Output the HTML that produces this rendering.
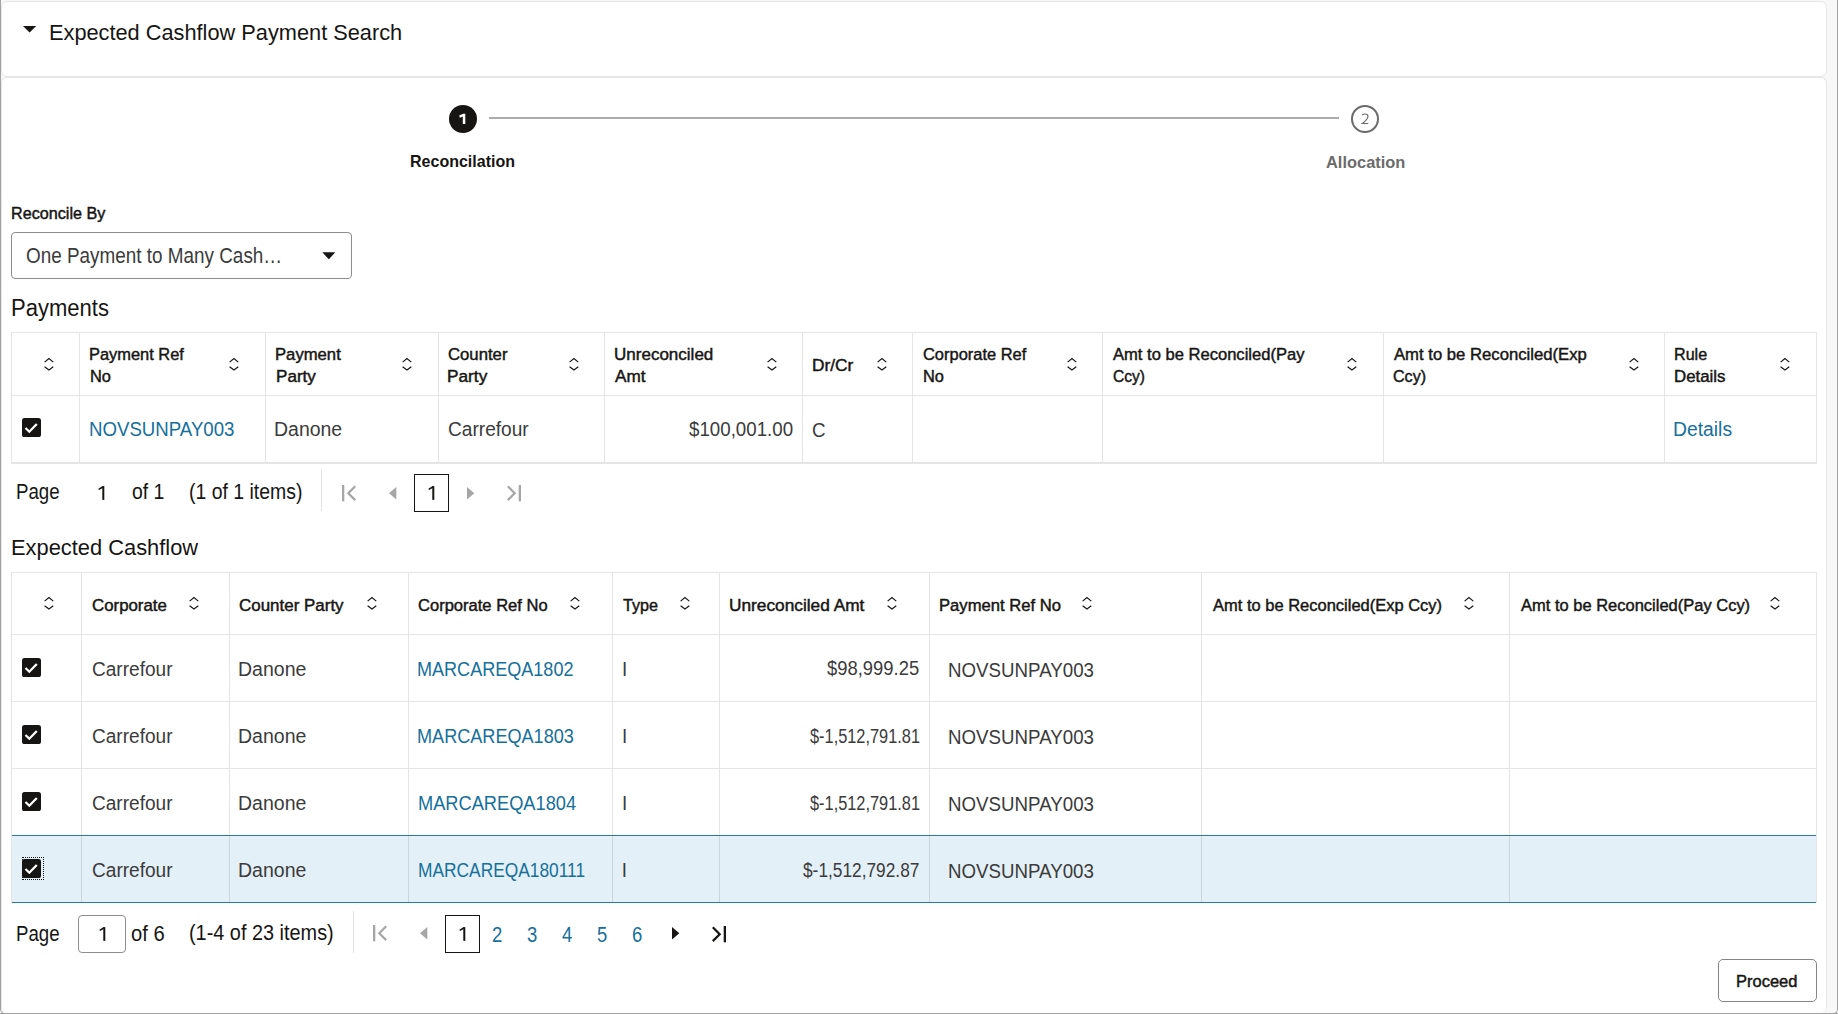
<!DOCTYPE html>
<html><head><meta charset="utf-8">
<style>
*{box-sizing:border-box;margin:0;padding:0}
html,body{width:1838px;height:1014px;overflow:hidden;background:#fff;font-family:"Liberation Sans",sans-serif;color:#161513}
.a{position:absolute}
.t{position:absolute;white-space:nowrap;transform-origin:0 0}
.vl{position:absolute;width:1px;background:#e5e5e5}
.hl{position:absolute;height:1px;background:#e5e5e5}
.s{-webkit-text-stroke:0.45px currentColor}
.b{font-weight:bold}
</style></head><body>

<div class="a" style="left:0;top:-10px;width:1838px;height:1024px;background:#f8f8f8;border:1px solid #a2a2a2;border-top:none;border-radius:0 0 5px 5px"></div>
<div class="a" style="left:1px;top:1px;width:1826px;height:76px;background:#fff;border:1px solid #e6e6e6;border-radius:6px"></div>
<div class="a" style="left:1px;top:77px;width:1826px;height:936px;background:#fff;border:1px solid #e6e6e6;border-bottom:none;border-radius:6px 6px 5px 5px"></div>
<div class="a" style="left:0;top:1013px;width:1838px;height:1px;background:#a2a2a2"></div>
<svg class="a" style="left:23px;top:26px" width="14" height="7" viewBox="0 0 14 7"><path d="M0 0H13.2L6.6 6.6Z" fill="#161513"/></svg>
<div class="a" style="left:489px;top:117px;width:850px;height:2px;background:#ababab"></div>
<div class="a" style="left:449px;top:105px;width:28px;height:28px;border-radius:50%;background:#161513"></div>
<svg class="a" style="left:455px;top:111px" width="16" height="16" viewBox="0 0 16 16"><path d="M4.2 4.6L8.2 2.8H10.3V13.1H7.8V5.6L4.9 6.7Z" fill="#fff"/></svg>
<div class="a" style="left:1351px;top:105px;width:28px;height:28px;border-radius:50%;border:2px solid #6b6b6b"></div>
<svg class="a" style="left:1357px;top:111px" width="16" height="16" viewBox="0 0 16 16"><path d="M5.0 4.2C5.8 3.3 6.8 3.0 8.0 3.0C9.9 3.0 11.0 4.1 11.0 5.6C11.0 7.2 10.0 8.3 7.6 10.6L5.3 12.5H11.3" fill="none" stroke="#6b6b6b" stroke-width="1.2"/></svg>
<div class="a" style="left:11px;top:232px;width:341px;height:47px;border:1px solid #8d8d8d;border-radius:4px"></div>
<svg class="a" style="left:322px;top:251.5px" width="14" height="8" viewBox="0 0 14 8"><path d="M0.3 0.3H13.3L6.8 7.3Z" fill="#161513"/></svg>
<div class="a" style="left:11px;top:332px;width:1806px;height:132px;border:1px solid #e5e5e5;border-bottom:2px solid #e5e5e5"></div>
<div class="vl" style="left:79px;top:332px;height:130px"></div>
<div class="vl" style="left:265px;top:332px;height:130px"></div>
<div class="vl" style="left:438px;top:332px;height:130px"></div>
<div class="vl" style="left:604px;top:332px;height:130px"></div>
<div class="vl" style="left:802px;top:332px;height:130px"></div>
<div class="vl" style="left:912px;top:332px;height:130px"></div>
<div class="vl" style="left:1102px;top:332px;height:130px"></div>
<div class="vl" style="left:1383px;top:332px;height:130px"></div>
<div class="vl" style="left:1664px;top:332px;height:130px"></div>
<div class="hl" style="left:11px;top:395px;width:1805px"></div>
<svg class="a" style="left:42.90px;top:356.50px" width="11.90" height="14.60" viewBox="-1 -1 11.90 14.60"><path d="M0.6 4.1L4.95 0.6L9.30 4.1M0.6 8.80L4.95 12.00L9.30 8.80" fill="none" stroke="#161513" stroke-width="1.2"/></svg>
<svg class="a" style="left:228.30px;top:357.00px" width="11.90" height="14.60" viewBox="-1 -1 11.90 14.60"><path d="M0.6 4.1L4.95 0.6L9.30 4.1M0.6 8.80L4.95 12.00L9.30 8.80" fill="none" stroke="#161513" stroke-width="1.2"/></svg>
<svg class="a" style="left:401.40px;top:357.00px" width="11.90" height="14.60" viewBox="-1 -1 11.90 14.60"><path d="M0.6 4.1L4.95 0.6L9.30 4.1M0.6 8.80L4.95 12.00L9.30 8.80" fill="none" stroke="#161513" stroke-width="1.2"/></svg>
<svg class="a" style="left:568.00px;top:357.00px" width="11.90" height="14.60" viewBox="-1 -1 11.90 14.60"><path d="M0.6 4.1L4.95 0.6L9.30 4.1M0.6 8.80L4.95 12.00L9.30 8.80" fill="none" stroke="#161513" stroke-width="1.2"/></svg>
<svg class="a" style="left:765.80px;top:356.80px" width="11.90" height="14.60" viewBox="-1 -1 11.90 14.60"><path d="M0.6 4.1L4.95 0.6L9.30 4.1M0.6 8.80L4.95 12.00L9.30 8.80" fill="none" stroke="#161513" stroke-width="1.2"/></svg>
<svg class="a" style="left:875.50px;top:356.80px" width="11.90" height="14.60" viewBox="-1 -1 11.90 14.60"><path d="M0.6 4.1L4.95 0.6L9.30 4.1M0.6 8.80L4.95 12.00L9.30 8.80" fill="none" stroke="#161513" stroke-width="1.2"/></svg>
<svg class="a" style="left:1065.70px;top:356.80px" width="11.90" height="14.60" viewBox="-1 -1 11.90 14.60"><path d="M0.6 4.1L4.95 0.6L9.30 4.1M0.6 8.80L4.95 12.00L9.30 8.80" fill="none" stroke="#161513" stroke-width="1.2"/></svg>
<svg class="a" style="left:1345.90px;top:356.80px" width="11.90" height="14.60" viewBox="-1 -1 11.90 14.60"><path d="M0.6 4.1L4.95 0.6L9.30 4.1M0.6 8.80L4.95 12.00L9.30 8.80" fill="none" stroke="#161513" stroke-width="1.2"/></svg>
<svg class="a" style="left:1627.50px;top:356.80px" width="11.90" height="14.60" viewBox="-1 -1 11.90 14.60"><path d="M0.6 4.1L4.95 0.6L9.30 4.1M0.6 8.80L4.95 12.00L9.30 8.80" fill="none" stroke="#161513" stroke-width="1.2"/></svg>
<svg class="a" style="left:1778.90px;top:356.80px" width="11.90" height="14.60" viewBox="-1 -1 11.90 14.60"><path d="M0.6 4.1L4.95 0.6L9.30 4.1M0.6 8.80L4.95 12.00L9.30 8.80" fill="none" stroke="#161513" stroke-width="1.2"/></svg>
<svg class="a" style="left:22px;top:418px" width="19" height="19" viewBox="0 0 19 19"><rect x="0" y="0" width="19" height="19" rx="2.6" fill="#161513"/><path d="M3.5 10.0L7.3 13.7L14.8 6.0" fill="none" stroke="#fff" stroke-width="2.3"/></svg>
<div class="vl" style="left:321px;top:469px;height:42px;background:#e3e3e3"></div>
<svg class="a" style="left:342.3px;top:485.3px" width="16" height="17" viewBox="0 0 16 17"><rect x="0" y="0" width="2.3" height="16.3" fill="#a6a6a6"/><path d="M13.2 1.2L6.3 8.15L13.2 15.1" fill="none" stroke="#a6a6a6" stroke-width="2.2"/></svg>
<svg class="a" style="left:389px;top:487.3px" width="8" height="13" viewBox="0 0 8 13"><path d="M7.3 0V12.6L0 6.3Z" fill="#a6a6a6"/></svg>
<svg class="a" style="left:467px;top:487.3px" width="8" height="13" viewBox="0 0 8 13"><path d="M0 0V12.6L7.3 6.3Z" fill="#a6a6a6"/></svg>
<svg class="a" style="left:506.8px;top:485.3px" width="16" height="17" viewBox="0 0 16 17"><rect x="11.7" y="0" width="2.3" height="16.3" fill="#a6a6a6"/><path d="M0.8 1.2L7.7 8.15L0.8 15.1" fill="none" stroke="#a6a6a6" stroke-width="2.2"/></svg>
<div class="a" style="left:414px;top:474px;width:35px;height:38px;border:1px solid #161513"></div>
<div class="a" style="left:11px;top:572px;width:1806px;height:331px;border:1px solid #e5e5e5;border-bottom:none"></div>
<div class="vl" style="left:81px;top:572px;height:263px"></div>
<div class="vl" style="left:229px;top:572px;height:263px"></div>
<div class="vl" style="left:408px;top:572px;height:263px"></div>
<div class="vl" style="left:612px;top:572px;height:263px"></div>
<div class="vl" style="left:719px;top:572px;height:263px"></div>
<div class="vl" style="left:929px;top:572px;height:263px"></div>
<div class="vl" style="left:1201px;top:572px;height:263px"></div>
<div class="vl" style="left:1509px;top:572px;height:263px"></div>
<div class="hl" style="left:11px;top:634px;width:1805px"></div>
<div class="hl" style="left:11px;top:701px;width:1805px"></div>
<div class="hl" style="left:11px;top:768px;width:1805px"></div>
<div class="a" style="left:12px;top:835px;width:1804px;height:68px;background:#e4f0f7;border-top:1px solid #2a7aa3;border-bottom:1px solid #2a7aa3"></div>
<div class="vl" style="left:81px;top:836px;height:66px;background:#c9d6de"></div>
<div class="vl" style="left:229px;top:836px;height:66px;background:#c9d6de"></div>
<div class="vl" style="left:408px;top:836px;height:66px;background:#c9d6de"></div>
<div class="vl" style="left:612px;top:836px;height:66px;background:#c9d6de"></div>
<div class="vl" style="left:719px;top:836px;height:66px;background:#c9d6de"></div>
<div class="vl" style="left:929px;top:836px;height:66px;background:#c9d6de"></div>
<div class="vl" style="left:1201px;top:836px;height:66px;background:#c9d6de"></div>
<div class="vl" style="left:1509px;top:836px;height:66px;background:#c9d6de"></div>
<svg class="a" style="left:42.90px;top:595.70px" width="11.90" height="14.60" viewBox="-1 -1 11.90 14.60"><path d="M0.6 4.1L4.95 0.6L9.30 4.1M0.6 8.80L4.95 12.00L9.30 8.80" fill="none" stroke="#161513" stroke-width="1.2"/></svg>
<svg class="a" style="left:187.50px;top:595.70px" width="11.90" height="14.60" viewBox="-1 -1 11.90 14.60"><path d="M0.6 4.1L4.95 0.6L9.30 4.1M0.6 8.80L4.95 12.00L9.30 8.80" fill="none" stroke="#161513" stroke-width="1.2"/></svg>
<svg class="a" style="left:365.60px;top:595.70px" width="11.90" height="14.60" viewBox="-1 -1 11.90 14.60"><path d="M0.6 4.1L4.95 0.6L9.30 4.1M0.6 8.80L4.95 12.00L9.30 8.80" fill="none" stroke="#161513" stroke-width="1.2"/></svg>
<svg class="a" style="left:568.80px;top:595.70px" width="11.90" height="14.60" viewBox="-1 -1 11.90 14.60"><path d="M0.6 4.1L4.95 0.6L9.30 4.1M0.6 8.80L4.95 12.00L9.30 8.80" fill="none" stroke="#161513" stroke-width="1.2"/></svg>
<svg class="a" style="left:679.00px;top:595.70px" width="11.90" height="14.60" viewBox="-1 -1 11.90 14.60"><path d="M0.6 4.1L4.95 0.6L9.30 4.1M0.6 8.80L4.95 12.00L9.30 8.80" fill="none" stroke="#161513" stroke-width="1.2"/></svg>
<svg class="a" style="left:886.00px;top:595.70px" width="11.90" height="14.60" viewBox="-1 -1 11.90 14.60"><path d="M0.6 4.1L4.95 0.6L9.30 4.1M0.6 8.80L4.95 12.00L9.30 8.80" fill="none" stroke="#161513" stroke-width="1.2"/></svg>
<svg class="a" style="left:1081.30px;top:595.70px" width="11.90" height="14.60" viewBox="-1 -1 11.90 14.60"><path d="M0.6 4.1L4.95 0.6L9.30 4.1M0.6 8.80L4.95 12.00L9.30 8.80" fill="none" stroke="#161513" stroke-width="1.2"/></svg>
<svg class="a" style="left:1462.80px;top:595.70px" width="11.90" height="14.60" viewBox="-1 -1 11.90 14.60"><path d="M0.6 4.1L4.95 0.6L9.30 4.1M0.6 8.80L4.95 12.00L9.30 8.80" fill="none" stroke="#161513" stroke-width="1.2"/></svg>
<svg class="a" style="left:1769.00px;top:595.70px" width="11.90" height="14.60" viewBox="-1 -1 11.90 14.60"><path d="M0.6 4.1L4.95 0.6L9.30 4.1M0.6 8.80L4.95 12.00L9.30 8.80" fill="none" stroke="#161513" stroke-width="1.2"/></svg>
<svg class="a" style="left:22px;top:657.5px" width="19" height="19" viewBox="0 0 19 19"><rect x="0" y="0" width="19" height="19" rx="2.6" fill="#161513"/><path d="M3.5 10.0L7.3 13.7L14.8 6.0" fill="none" stroke="#fff" stroke-width="2.3"/></svg>
<svg class="a" style="left:22px;top:724.5px" width="19" height="19" viewBox="0 0 19 19"><rect x="0" y="0" width="19" height="19" rx="2.6" fill="#161513"/><path d="M3.5 10.0L7.3 13.7L14.8 6.0" fill="none" stroke="#fff" stroke-width="2.3"/></svg>
<svg class="a" style="left:22px;top:791.5px" width="19" height="19" viewBox="0 0 19 19"><rect x="0" y="0" width="19" height="19" rx="2.6" fill="#161513"/><path d="M3.5 10.0L7.3 13.7L14.8 6.0" fill="none" stroke="#fff" stroke-width="2.3"/></svg>
<svg class="a" style="left:22px;top:858.7px" width="19" height="19" viewBox="0 0 19 19"><rect x="0" y="0" width="19" height="19" rx="2.6" fill="#161513"/><path d="M3.5 10.0L7.3 13.7L14.8 6.0" fill="none" stroke="#fff" stroke-width="2.3"/></svg>
<div class="a" style="left:22px;top:857px;width:21.5px;height:23px;border:1px dotted #161513"></div>
<div class="a" style="left:78px;top:915px;width:48px;height:38px;border:1px solid #8d8d8d;border-radius:4px"></div>
<div class="vl" style="left:352.5px;top:910.5px;height:42px;background:#e3e3e3"></div>
<svg class="a" style="left:372.8px;top:925.2px" width="16" height="17" viewBox="0 0 16 17"><rect x="0" y="0" width="2.3" height="16.3" fill="#a6a6a6"/><path d="M13.2 1.2L6.3 8.15L13.2 15.1" fill="none" stroke="#a6a6a6" stroke-width="2.2"/></svg>
<svg class="a" style="left:419.6px;top:927.1px" width="8" height="13" viewBox="0 0 8 13"><path d="M7.3 0V12.6L0 6.3Z" fill="#a6a6a6"/></svg>
<div class="a" style="left:445px;top:915px;width:35px;height:38px;border:1px solid #161513"></div>
<svg class="a" style="left:672.1px;top:927.0px" width="8" height="13" viewBox="0 0 8 13"><path d="M0 0V12.6L7.3 6.3Z" fill="#161513"/></svg>
<svg class="a" style="left:712.2px;top:925.6px" width="16" height="17" viewBox="0 0 16 17"><rect x="11.7" y="0" width="2.3" height="16.3" fill="#161513"/><path d="M0.8 1.2L7.7 8.15L0.8 15.1" fill="none" stroke="#161513" stroke-width="2.2"/></svg>
<div class="a" style="left:1718px;top:959px;width:99px;height:43px;border:1px solid #858585;border-radius:5px"></div>
<svg class="a" style="left:97.40px;top:484.90px" width="10" height="17" viewBox="-1 -1 10 17"><rect x="4.3" y="0.1" width="2.0" height="13.8" fill="#161513"/><path d="M0.7 3.4L5.2 0.7" fill="none" stroke="#161513" stroke-width="1.6"/></svg>
<svg class="a" style="left:426.70px;top:485.00px" width="10" height="17" viewBox="-1 -1 10 17"><rect x="4.3" y="0.1" width="2.0" height="13.8" fill="#161513"/><path d="M0.7 3.4L5.2 0.7" fill="none" stroke="#161513" stroke-width="1.6"/></svg>
<svg class="a" style="left:97.60px;top:925.90px" width="10" height="17" viewBox="-1 -1 10 17"><rect x="4.3" y="0.1" width="2.0" height="13.8" fill="#161513"/><path d="M0.7 3.4L5.2 0.7" fill="none" stroke="#161513" stroke-width="1.6"/></svg>
<svg class="a" style="left:457.60px;top:926.00px" width="10" height="17" viewBox="-1 -1 10 17"><rect x="4.3" y="0.1" width="2.0" height="13.8" fill="#161513"/><path d="M0.7 3.4L5.2 0.7" fill="none" stroke="#161513" stroke-width="1.6"/></svg>
<div class="t" style="left:49.28px;top:18.00px;font-size:21.7px;line-height:28px;color:#161513;transform:scale(1.0033,1.0241)">Expected Cashflow Payment Search</div>
<div class="t b" style="left:409.52px;top:150.00px;font-size:16px;line-height:21px;color:#161513;transform:scale(1.0012,1.0397)">Reconcilation</div>
<div class="t b" style="left:1326.12px;top:151.00px;font-size:16.5px;line-height:21px;color:#6b6b6b;transform:scale(0.9950,1.0515)">Allocation</div>
<div class="t s" style="left:11.44px;top:203.00px;font-size:16px;line-height:21px;color:#161513;transform:scale(1.0100,0.9794)">Reconcile By</div>
<div class="t" style="left:26.24px;top:242.00px;font-size:19px;line-height:25px;color:#3b3b3b;transform:scale(0.9944,1.1268)">One Payment to Many Cash…</div>
<div class="t" style="left:10.83px;top:293.00px;font-size:22px;line-height:29px;color:#161513;transform:scale(1.0020,1.0460)">Payments</div>
<div class="t s" style="left:89.31px;top:345.00px;font-size:16.5px;line-height:21px;color:#161513;transform:scale(0.9948,0.9629)">Payment Ref</div>
<div class="t s" style="left:89.82px;top:367.00px;font-size:16.5px;line-height:21px;color:#161513;transform:scale(0.9939,0.9629)">No</div>
<div class="t s" style="left:275.11px;top:345.00px;font-size:16.5px;line-height:21px;color:#161513;transform:scale(1.0099,0.9629)">Payment</div>
<div class="t s" style="left:275.55px;top:367.00px;font-size:16.5px;line-height:21px;color:#161513;transform:scale(1.0365,0.9629)">Party</div>
<div class="t s" style="left:447.80px;top:345.00px;font-size:16.5px;line-height:21px;color:#161513;transform:scale(1.0130,0.9629)">Counter</div>
<div class="t s" style="left:447.37px;top:367.00px;font-size:16.5px;line-height:21px;color:#161513;transform:scale(1.0451,0.9629)">Party</div>
<div class="t s" style="left:614.36px;top:345.00px;font-size:16.5px;line-height:21px;color:#161513;transform:scale(1.0315,0.9629)">Unreconciled</div>
<div class="t s" style="left:615.37px;top:367.00px;font-size:16.5px;line-height:21px;color:#161513;transform:scale(1.0411,0.9629)">Amt</div>
<div class="t s" style="left:812.42px;top:356.00px;font-size:16.5px;line-height:21px;color:#161513;transform:scale(1.0489,0.9629)">Dr/Cr</div>
<div class="t s" style="left:922.52px;top:345.00px;font-size:16.5px;line-height:21px;color:#161513;transform:scale(0.9964,0.9629)">Corporate Ref</div>
<div class="t s" style="left:922.51px;top:367.00px;font-size:16.5px;line-height:21px;color:#161513;transform:scale(0.9939,0.9629)">No</div>
<div class="t s" style="left:1113.42px;top:345.00px;font-size:16.5px;line-height:21px;color:#161513;transform:scale(1.0038,0.9629)">Amt to be Reconciled(Pay</div>
<div class="t s" style="left:1112.81px;top:367.00px;font-size:16.5px;line-height:21px;color:#161513;transform:scale(0.9435,0.9629)">Ccy)</div>
<div class="t s" style="left:1393.86px;top:345.00px;font-size:16.5px;line-height:21px;color:#161513;transform:scale(1.0106,0.9629)">Amt to be Reconciled(Exp</div>
<div class="t s" style="left:1392.97px;top:367.00px;font-size:16.5px;line-height:21px;color:#161513;transform:scale(0.9753,0.9629)">Ccy)</div>
<div class="t s" style="left:1674.11px;top:345.00px;font-size:16.5px;line-height:21px;color:#161513;transform:scale(0.9769,0.9629)">Rule</div>
<div class="t s" style="left:1674.08px;top:367.00px;font-size:16.5px;line-height:21px;color:#161513;transform:scale(1.0207,0.9629)">Details</div>
<div class="t" style="left:88.79px;top:416.00px;font-size:18.8px;line-height:24px;color:#16709c;transform:scale(0.9931,1.0960)">NOVSUNPAY003</div>
<div class="t" style="left:274.40px;top:416.00px;font-size:18.8px;line-height:24px;color:#3b3b3b;transform:scale(1.0366,1.0960)">Danone</div>
<div class="t" style="left:447.58px;top:416.00px;font-size:18.8px;line-height:24px;color:#3b3b3b;transform:scale(1.0171,1.0960)">Carrefour</div>
<div class="t" style="left:688.91px;top:417.00px;font-size:18.8px;line-height:24px;color:#3b3b3b;transform:scale(0.9963,1.0326)">$100,001.00</div>
<div class="t" style="left:811.93px;top:417.00px;font-size:18.8px;line-height:24px;color:#3b3b3b;transform:scale(1.0000,1.0960)">C</div>
<div class="t" style="left:1673.32px;top:416.00px;font-size:18.8px;line-height:24px;color:#16709c;transform:scale(1.0284,1.0960)">Details</div>
<div class="t" style="left:16.19px;top:478.00px;font-size:18.6px;line-height:24px;color:#161513;transform:scale(1.0058,1.1419)">Page</div>
<div class="t" style="left:131.51px;top:478.00px;font-size:18.6px;line-height:24px;color:#161513;transform:scale(1.0454,1.1419)">of 1</div>
<div class="t" style="left:188.91px;top:478.00px;font-size:18.6px;line-height:24px;color:#161513;transform:scale(1.0459,1.1419)">(1 of 1 items)</div>
<div class="t" style="left:10.85px;top:532.00px;font-size:22px;line-height:29px;color:#161513;transform:scale(0.9937,1.0393)">Expected Cashflow</div>
<div class="t s" style="left:91.69px;top:596.00px;font-size:16.5px;line-height:21px;color:#161513;transform:scale(1.0205,0.9629)">Corporate</div>
<div class="t s" style="left:239.12px;top:596.00px;font-size:16.5px;line-height:21px;color:#161513;transform:scale(1.0273,0.9629)">Counter Party</div>
<div class="t s" style="left:418.35px;top:596.00px;font-size:16.5px;line-height:21px;color:#161513;transform:scale(1.0024,0.9629)">Corporate Ref No</div>
<div class="t s" style="left:623.22px;top:596.00px;font-size:16.5px;line-height:21px;color:#161513;transform:scale(0.9789,0.9629)">Type</div>
<div class="t s" style="left:729.29px;top:596.00px;font-size:16.5px;line-height:21px;color:#161513;transform:scale(1.0466,0.9629)">Unreconciled Amt</div>
<div class="t s" style="left:938.78px;top:596.00px;font-size:16.5px;line-height:21px;color:#161513;transform:scale(1.0069,0.9629)">Payment Ref No</div>
<div class="t s" style="left:1212.51px;top:596.00px;font-size:16.5px;line-height:21px;color:#161513;transform:scale(0.9993,0.9629)">Amt to be Reconciled(Exp Ccy)</div>
<div class="t s" style="left:1520.51px;top:596.00px;font-size:16.5px;line-height:21px;color:#161513;transform:scale(0.9994,0.9629)">Amt to be Reconciled(Pay Ccy)</div>
<div class="t" style="left:91.75px;top:656.00px;font-size:18.8px;line-height:24px;color:#3b3b3b;transform:scale(1.0148,1.0960)">Carrefour</div>
<div class="t" style="left:238.33px;top:656.00px;font-size:18.8px;line-height:24px;color:#3b3b3b;transform:scale(1.0393,1.0960)">Danone</div>
<div class="t" style="left:417.23px;top:656.00px;font-size:18.8px;line-height:24px;color:#16709c;transform:scale(0.9608,1.0960)">MARCAREQA1802</div>
<div class="t" style="left:622.11px;top:656.00px;font-size:18.8px;line-height:24px;color:#3b3b3b;transform:scale(1.0000,1.0960)">I</div>
<div class="t" style="left:827.16px;top:656.00px;font-size:18.8px;line-height:24px;color:#3b3b3b;transform:scale(0.9805,1.0326)">$98,999.25</div>
<div class="t" style="left:948.48px;top:657.00px;font-size:18.8px;line-height:24px;color:#3b3b3b;transform:scale(0.9964,1.0960)">NOVSUNPAY003</div>
<div class="t" style="left:91.75px;top:723.00px;font-size:18.8px;line-height:24px;color:#3b3b3b;transform:scale(1.0148,1.0960)">Carrefour</div>
<div class="t" style="left:238.33px;top:723.00px;font-size:18.8px;line-height:24px;color:#3b3b3b;transform:scale(1.0393,1.0960)">Danone</div>
<div class="t" style="left:417.16px;top:723.00px;font-size:18.8px;line-height:24px;color:#16709c;transform:scale(0.9634,1.0960)">MARCAREQA1803</div>
<div class="t" style="left:622.11px;top:723.00px;font-size:18.8px;line-height:24px;color:#3b3b3b;transform:scale(1.0000,1.0960)">I</div>
<div class="t" style="left:809.55px;top:724.00px;font-size:18.8px;line-height:24px;color:#3b3b3b;transform:scale(0.8708,1.0326)">$-1,512,791.81</div>
<div class="t" style="left:948.48px;top:724.00px;font-size:18.8px;line-height:24px;color:#3b3b3b;transform:scale(0.9964,1.0960)">NOVSUNPAY003</div>
<div class="t" style="left:91.75px;top:790.00px;font-size:18.8px;line-height:24px;color:#3b3b3b;transform:scale(1.0148,1.0960)">Carrefour</div>
<div class="t" style="left:238.33px;top:790.00px;font-size:18.8px;line-height:24px;color:#3b3b3b;transform:scale(1.0393,1.0960)">Danone</div>
<div class="t" style="left:417.55px;top:790.00px;font-size:18.8px;line-height:24px;color:#16709c;transform:scale(0.9706,1.0960)">MARCAREQA1804</div>
<div class="t" style="left:622.11px;top:790.00px;font-size:18.8px;line-height:24px;color:#3b3b3b;transform:scale(1.0000,1.0960)">I</div>
<div class="t" style="left:809.55px;top:791.00px;font-size:18.8px;line-height:24px;color:#3b3b3b;transform:scale(0.8708,1.0326)">$-1,512,791.81</div>
<div class="t" style="left:948.48px;top:791.00px;font-size:18.8px;line-height:24px;color:#3b3b3b;transform:scale(0.9964,1.0960)">NOVSUNPAY003</div>
<div class="t" style="left:91.88px;top:857.00px;font-size:18.8px;line-height:24px;color:#3b3b3b;transform:scale(1.0154,1.0960)">Carrefour</div>
<div class="t" style="left:238.31px;top:857.00px;font-size:18.8px;line-height:24px;color:#3b3b3b;transform:scale(1.0395,1.0960)">Danone</div>
<div class="t" style="left:417.72px;top:857.00px;font-size:18.8px;line-height:24px;color:#16709c;transform:scale(0.9237,1.0960)">MARCAREQA180111</div>
<div class="t" style="left:621.85px;top:857.00px;font-size:18.8px;line-height:24px;color:#3b3b3b;transform:scale(1.0000,1.0960)">I</div>
<div class="t" style="left:803.43px;top:858.00px;font-size:18.8px;line-height:24px;color:#3b3b3b;transform:scale(0.9213,1.0326)">$-1,512,792.87</div>
<div class="t" style="left:948.07px;top:858.00px;font-size:18.8px;line-height:24px;color:#3b3b3b;transform:scale(0.9959,1.0960)">NOVSUNPAY003</div>
<div class="t" style="left:16.29px;top:920.00px;font-size:18.6px;line-height:24px;color:#161513;transform:scale(1.0042,1.1419)">Page</div>
<div class="t" style="left:131.03px;top:920.00px;font-size:18.6px;line-height:24px;color:#161513;transform:scale(1.0874,1.1419)">of 6</div>
<div class="t" style="left:188.68px;top:919.00px;font-size:18.6px;line-height:24px;color:#161513;transform:scale(1.0688,1.1419)">(1-4 of 23 items)</div>
<div class="t" style="left:492.18px;top:921.00px;font-size:18.6px;line-height:24px;color:#16709c;transform:scale(0.9946,1.1419)">2</div>
<div class="t" style="left:526.71px;top:921.00px;font-size:18.6px;line-height:24px;color:#16709c;transform:scale(0.9946,1.1419)">3</div>
<div class="t" style="left:562.41px;top:921.00px;font-size:18.6px;line-height:24px;color:#16709c;transform:scale(0.9946,1.1419)">4</div>
<div class="t" style="left:596.61px;top:921.00px;font-size:18.6px;line-height:24px;color:#16709c;transform:scale(0.9946,1.1419)">5</div>
<div class="t" style="left:631.72px;top:921.00px;font-size:18.6px;line-height:24px;color:#16709c;transform:scale(0.9946,1.1419)">6</div>
<div class="t s" style="left:1735.97px;top:971.00px;font-size:16.0px;line-height:21px;color:#161513;transform:scale(1.0299,0.9840)">Proceed</div>

</body></html>
